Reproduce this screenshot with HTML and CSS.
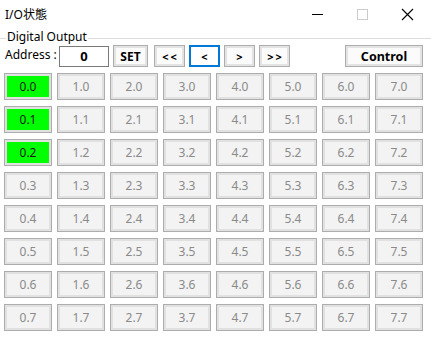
FILE: index.html
```html
<!DOCTYPE html>
<html>
<head>
<meta charset="utf-8">
<link rel="stylesheet" href="styles.css">
</head>
<body>
<div class="window">
  <div class="titlebar">
    <div class="title">I/O状態</div>
    <div class="controls">
      <svg class="ctl" width="45" height="30" viewBox="0 0 45 30"><line x1="12" y1="14.5" x2="23" y2="14.5" stroke="#000" stroke-width="1"/></svg>
      <svg class="ctl" width="45" height="30" viewBox="0 0 45 30"><rect x="12.5" y="9.5" width="10" height="10" fill="none" stroke="#cccccc" stroke-width="1"/></svg>
      <svg class="ctl" width="41" height="30" viewBox="0 0 41 30"><path d="M12 9 L23 20 M23 9 L12 20" stroke="#000" stroke-width="1.1" fill="none"/></svg>
    </div>
  </div>
  <div class="group">
    <div class="legend"><span class="lead"></span><span class="legend-text">Digital Output</span><span class="rule"></span></div>
    <div class="toolbar">
      <span class="addr-label">Address :</span>
      <div class="addr-input">0</div>
      <div class="tbtn set">SET</div>
      <div class="nav">
        <div class="tbtn navbtn">&lt;&lt;</div>
        <div class="tbtn navbtn focus">&lt;</div>
        <div class="tbtn navbtn">&gt;</div>
        <div class="tbtn navbtn">&gt;&gt;</div>
      </div>
      <div class="tbtn control">Control</div>
    </div>
    <div class="grid" id="grid"></div>
  </div>
</div>
<script>
  var g = document.getElementById('grid');
  for (var r = 0; r < 8; r++) {
    for (var c = 0; c < 8; c++) {
      var d = document.createElement('div');
      d.className = 'cell' + (c === 0 && r < 3 ? ' on' : '');
      d.textContent = c + '.' + r;
      g.appendChild(d);
    }
  }
</script>
</body>
</html>
```
FILE: styles.css
```css
html, body {
  margin: 0;
  padding: 0;
  background: #ffffff;
}
body {
  width: 431px;
  height: 337px;
  overflow: hidden;
  font-family: "Noto Sans", "Noto Sans CJK JP", sans-serif;
  font-size: 12px;
  color: #000;
}
.window {
  display: flex;
  flex-direction: column;
}
.titlebar {
  height: 30px;
  display: flex;
  align-items: center;
  justify-content: space-between;
}
.title {
  padding-left: 5px;
  font-size: 12px;
  line-height: 30px;
  margin-top: -1px;
  color: #000;
}
.controls {
  display: flex;
  align-items: flex-start;
  height: 30px;
}
.ctl {
  display: block;
}
.legend {
  display: flex;
  align-items: center;
  height: 16px;
}
.lead {
  width: 6px;
  height: 1px;
  background: #dcdcdc;
}
.legend-text {
  padding: 0 1px 0 1px;
  line-height: 14px;
  margin-top: -2px;
}
.rule {
  flex: 1;
  height: 1px;
  background: #dcdcdc;
}
.toolbar {
  display: flex;
  align-items: center;
  height: 22px;
  margin-top: -1px;
  padding-left: 5px;
}
.addr-label {
  width: 54px;
  line-height: 16px;
  margin-top: -2px;
}
.addr-input {
  width: 48px;
  height: 19px;
  border: 1px solid #7a7a7a;
  text-align: center;
  font-weight: bold;
  font-size: 13px;
  line-height: 18px;
  box-sizing: content-box;
}
.tbtn {
  box-sizing: border-box;
  height: 22px;
  border: 1px solid #adadad;
  box-shadow: inset 0 0 0 2px #e3e3e3;
  background: #fbfbfb;
  display: flex;
  align-items: center;
  justify-content: center;
  font-weight: bold;
  font-size: 12px;
}
.set {
  width: 35px;
  margin-left: 4px;
}
.nav {
  display: flex;
  gap: 4px;
  margin-left: 6px;
}
.navbtn {
  width: 31px;
  font-size: 11px;
  letter-spacing: 2px;
  padding-left: 2px;
}
.focus {
  border: 2px solid #0078d7;
  box-shadow: none;
  background: #ffffff;
}
.control {
  width: 78px;
  margin-left: 55px;
  font-size: 12.5px;
}
.grid {
  display: grid;
  grid-template-columns: repeat(8, 48px);
  grid-auto-rows: 27px;
  column-gap: 5px;
  row-gap: 6px;
  padding-left: 4px;
  margin-top: 6px;
}
.cell {
  box-sizing: border-box;
  border: 1px solid #adadad;
  box-shadow: inset 0 0 0 2px #e1e1e1;
  background: #f3f3f3;
  color: #8a8a8a;
  display: flex;
  align-items: center;
  justify-content: center;
  font-size: 12px;
}
.cell.on {
  background: #00ff00;
  color: #1a1a1a;
}
```
